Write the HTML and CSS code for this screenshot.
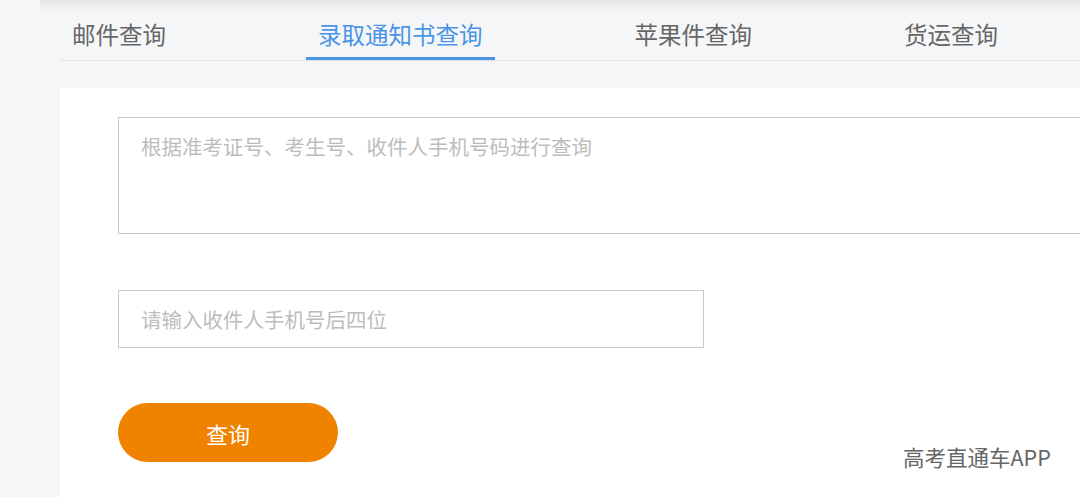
FILE: index.html
```html
<!DOCTYPE html>
<html lang="zh-CN">
<head>
    <meta charset="UTF-8">
    <meta name="viewport" content="width=device-width, initial-scale=1.0">
    <title>录取通知书查询</title>
    <link rel="stylesheet" href="styles.css">
</head>
<body>
    <div class="topbar"></div>
    <nav class="tabs">
        <a class="tab">邮件查询</a>
        <a class="tab active">录取通知书查询</a>
        <a class="tab">苹果件查询</a>
        <a class="tab">货运查询</a>
    </nav>
    <div class="card">
        <form class="query-form">
            <textarea class="field field-area" placeholder="根据准考证号、考生号、收件人手机号码进行查询"></textarea>
            <input type="text" class="field field-phone" placeholder="请输入收件人手机号后四位">
            <button type="button" class="btn">查询</button>
        </form>
    </div>
    <div class="watermark">高考直通车APP</div>
</body>
</html>
```

FILE: styles.css
```css
html, body {
    margin: 0;
    padding: 0;
    height: 100%;
}
body {
    font-family: "Microsoft YaHei", "Noto Sans CJK SC", "Noto Sans", sans-serif;
    background-color: #f5f6f8;
    overflow: hidden;
    position: relative;
}
.topbar {
    height: 12px;
    margin-left: 40px;
    background: linear-gradient(#e5e6e8, #f5f6f8);
}
.tabs {
    display: flex;
    gap: 128px;
    margin-left: 60px;
    border-bottom: 1px solid #e2e3e5;
    overflow: hidden;
}
.tab {
    height: 45px;
    line-height: 45px;
    padding: 0 12px;
    font-size: 23.5px;
    color: #666;
    border-bottom: 3px solid transparent;
    white-space: nowrap;
    cursor: pointer;
}
.tab.active {
    color: #4a94e6;
    border-bottom-color: #4a94e6;
}
.card {
    margin: 27px 0 0 60px;
    height: 420px;
    background: #fff;
    overflow: hidden;
}
.query-form {
    display: flex;
    flex-direction: column;
    align-items: flex-start;
    padding: 29px 0 0 58px;
}
.field {
    box-sizing: border-box;
    flex-shrink: 0;
    border: 1px solid #c8c8c8;
    font-family: inherit;
    font-size: 20.5px;
    color: #333;
    outline: none;
    background: #fff;
}
.field::placeholder {
    color: #bdbdbd;
}
.field-area {
    width: 1000px;
    height: 117px;
    padding: 13px 22px;
    resize: none;
}
.field-phone {
    width: 586px;
    height: 58px;
    margin-top: 56px;
    padding: 0 22px;
}
.btn {
    width: 220px;
    height: 59px;
    margin-top: 55px;
    border: none;
    border-radius: 30px;
    background-color: #ef8300;
    color: #fff;
    font-family: inherit;
    font-size: 22px;
    cursor: pointer;
}
.watermark {
    position: absolute;
    left: 903px;
    top: 442px;
    font-size: 21.5px;
    line-height: 30px;
    color: #666;
    font-family: "Noto Sans CJK SC", "Noto Sans", sans-serif;
}
```
